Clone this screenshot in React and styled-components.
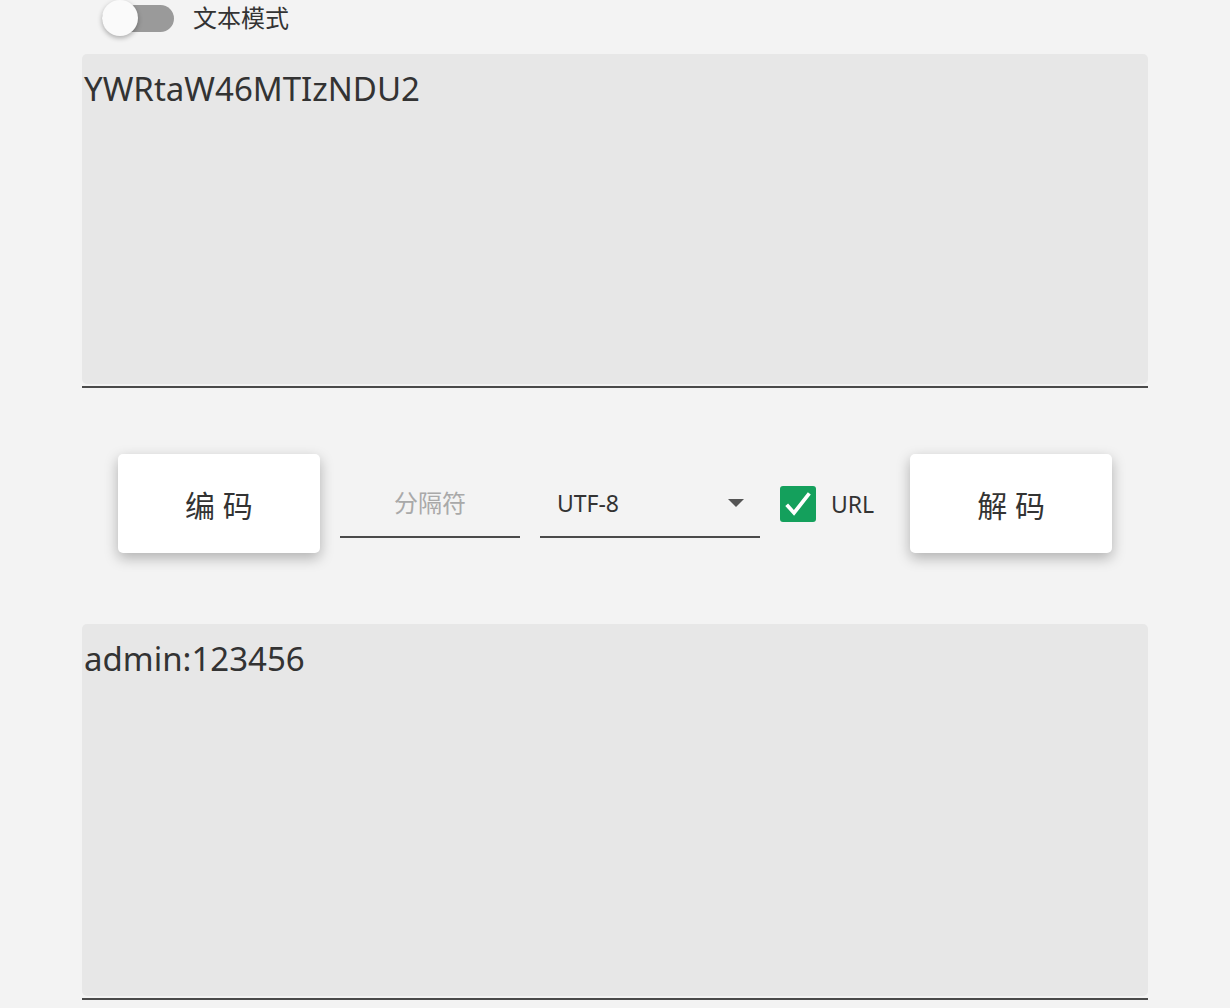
import React, { useState } from 'react';
import styled, { createGlobalStyle } from 'styled-components';

const GlobalStyle = createGlobalStyle`
  body {
    margin: 0;
    background: #f3f3f3;
    font-family: "Noto Sans", "Noto Sans CJK SC", sans-serif;
    color: #333333;
  }
`;

const Page = styled.div`
  width: 1066px;
  margin: 0 auto;
`;

const ToggleRow = styled.label`
  display: flex;
  align-items: center;
  height: 36px;
  padding-left: 20px;
  margin-bottom: 18px;
  gap: 19px;
  font-size: 24px;
  cursor: pointer;
`;

const ToggleText = styled.span`
  margin-bottom: 3px;
`;

const Track = styled.span`
  position: relative;
  width: 72px;
  height: 27px;
  border-radius: 14px;
  background: ${(p) => (p.on ? '#7fc7a2' : '#9a9a9a')};
`;

const Thumb = styled.span`
  position: absolute;
  top: -5px;
  left: ${(p) => (p.on ? '36px' : '0')};
  width: 36px;
  height: 36px;
  border-radius: 50%;
  background: #fafafa;
  box-shadow: 0 2px 5px rgba(0, 0, 0, 0.3);
`;

const Field = styled.div`
  border-bottom: 2px solid #4a4a4a;
`;

const Area = styled.textarea`
  display: block;
  box-sizing: border-box;
  width: 100%;
  height: ${(p) => p.h}px;
  margin: 0 0 2px;
  padding: 13px 2px 0;
  border: none;
  outline: none;
  resize: none;
  border-radius: 5px;
  background: #e7e7e7;
  color: #333333;
  font-family: "Noto Sans", "Noto Sans CJK SC", sans-serif;
  font-size: 33px;
  line-height: 1.36;
`;

const Actions = styled.div`
  display: flex;
  align-items: center;
  justify-content: center;
  gap: 20px;
  margin: 66px 0 71px;
`;

const Button = styled.button`
  width: 202px;
  height: 99px;
  border: none;
  border-radius: 5px;
  background: #ffffff;
  box-shadow: 0 5px 14px rgba(0, 0, 0, 0.28);
  font-family: "Noto Sans", "Noto Sans CJK SC", sans-serif;
  font-size: 30px;
  color: #333333;
  cursor: pointer;
`;

const Underlined = styled.div`
  box-sizing: border-box;
  width: ${(p) => p.w}px;
  height: 69px;
  display: flex;
  align-items: center;
  border-bottom: 2px solid #4a4a4a;
`;

const Input = styled.input`
  width: 100%;
  border: none;
  outline: none;
  background: transparent;
  text-align: center;
  font-family: "Noto Sans", "Noto Sans CJK SC", sans-serif;
  font-size: 24px;
  color: #333333;
  &::placeholder {
    color: #a9a9a9;
  }
`;

const SelectText = styled.span`
  flex: 1;
  padding-left: 17px;
  font-size: 23px;
`;

const Caret = styled.span`
  width: 0;
  height: 0;
  margin-right: 16px;
  border-left: 8px solid transparent;
  border-right: 8px solid transparent;
  border-top: 8px solid #555555;
`;

const CheckGroup = styled.label`
  display: flex;
  align-items: center;
  gap: 15px;
  margin-right: 16px;
  font-size: 23px;
  cursor: pointer;
`;

const Box = styled.span`
  display: flex;
  align-items: center;
  justify-content: center;
  width: 36px;
  height: 36px;
  border-radius: 3px;
  background: #14a05c;
`;

export default function App() {
  const [text, setText] = useState(false);
  const [url, setUrl] = useState(true);

  return (
    <Page>
      <GlobalStyle />
      <ToggleRow onClick={() => setText(!text)}>
        <Track on={text}>
          <Thumb on={text} />
        </Track>
        <ToggleText>文本模式</ToggleText>
      </ToggleRow>

      <Field>
        <Area h={330} defaultValue="YWRtaW46MTIzNDU2" />
      </Field>

      <Actions>
        <Button>编 码</Button>
        <Underlined w={180}>
          <Input placeholder="分隔符" />
        </Underlined>
        <Underlined w={220}>
          <SelectText>UTF-8</SelectText>
          <Caret />
        </Underlined>
        <CheckGroup onClick={() => setUrl(!url)}>
          <Box>
            {url && (
              <svg width="32" height="32" viewBox="0 0 24 24">
                <path d="M3.5 12.5l5.5 6.2L20.5 4" fill="none" stroke="#fff" strokeWidth="2.8" />
              </svg>
            )}
          </Box>
          URL
        </CheckGroup>
        <Button>解 码</Button>
      </Actions>

      <Field>
        <Area h={372} defaultValue="admin:123456" />
      </Field>
    </Page>
  );
}
